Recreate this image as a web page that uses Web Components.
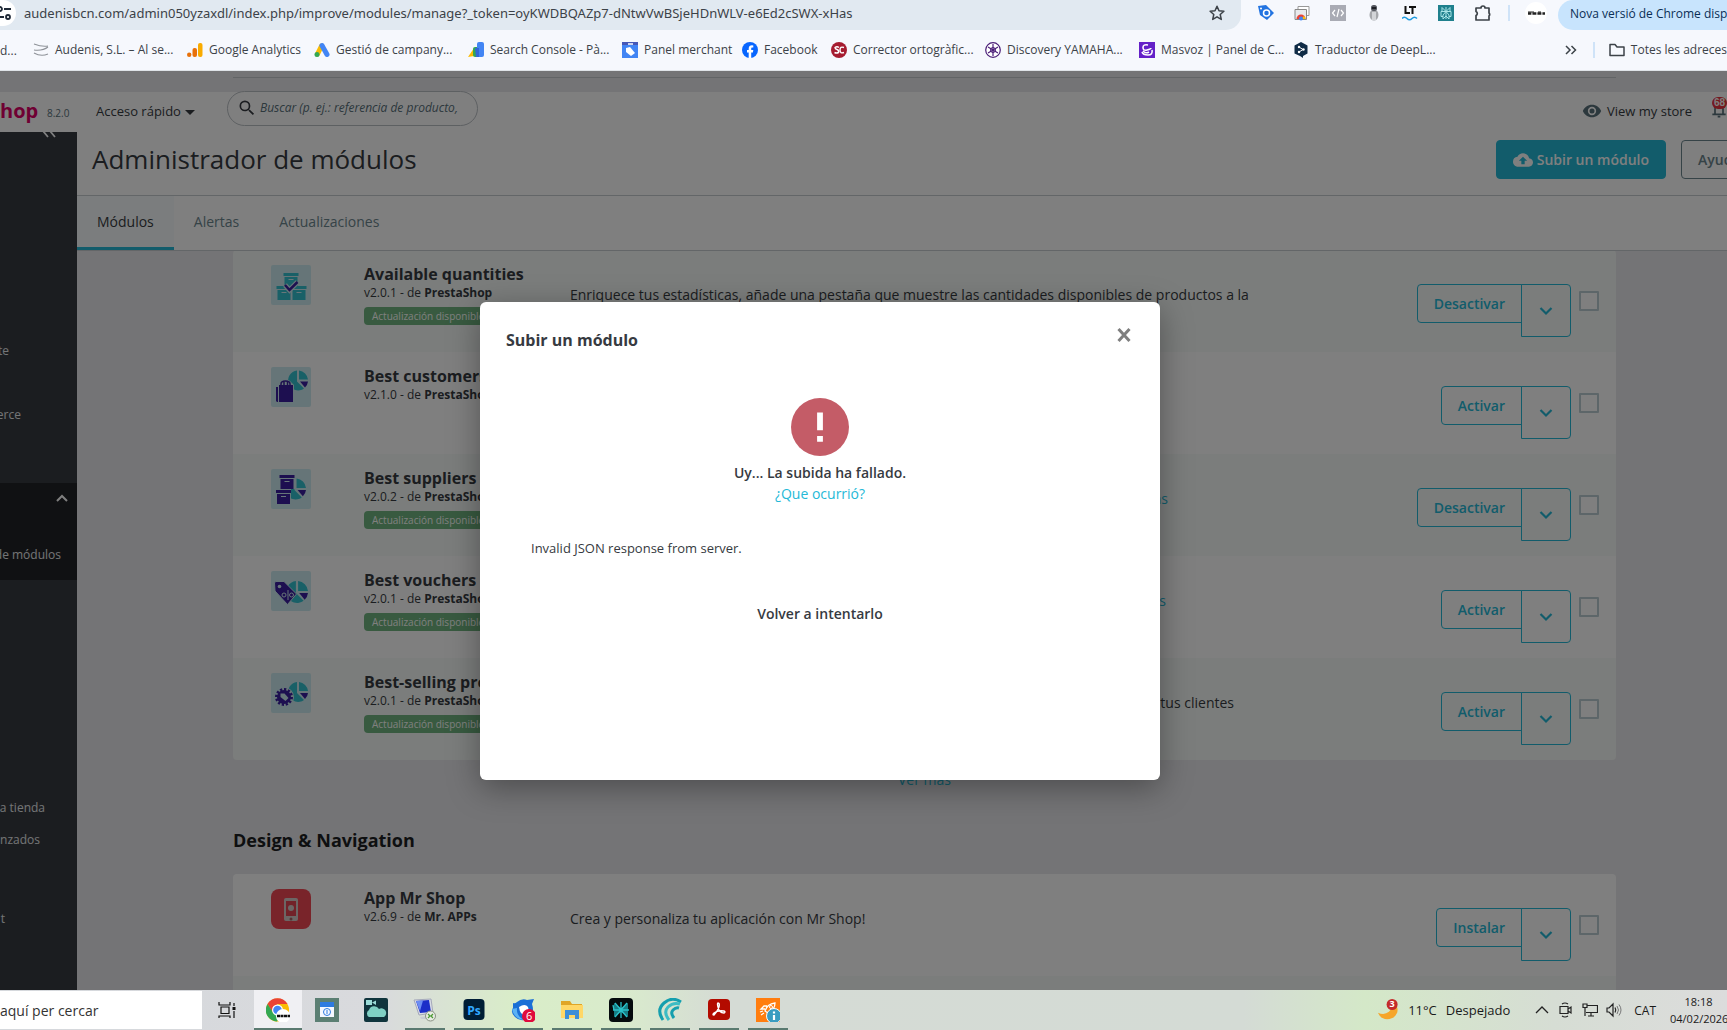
<!DOCTYPE html>
<html lang="es">
<head>
<meta charset="utf-8">
<title>Administrador de módulos</title>
<style>
  html, body { height: 100%; margin: 0; }
  body {
    display: flex;
    flex-direction: column;
    overflow: hidden;
    font-family: "Open Sans", "Noto Sans", sans-serif;
    font-size: 14px;
    color: #363a41;
  }
</style>
</head>
<body>
<browser-bar></browser-bar>
<admin-page>
  <upload-modal heading="Subir un módulo">
    <span slot="message">Uy... La subida ha fallado.</span>
    <span slot="detail">Invalid JSON response from server.</span>
  </upload-modal>
</admin-page>
<task-bar></task-bar>

<script>
  const pie = (x, y, r) => `<g transform="translate(${x} ${y}) scale(${r / 10})">
      <path fill="#32c0cf" d="M-1-10V1l7 7A10 10 0 1 1-1-10zM1-10A10 10 0 0 1 10-1H1z"/>
      <path fill="#3a1fa0" d="M2 1h8a10 10 0 0 1-3 6z"/></g>`;
  const box = (x, y, c) => `<path fill="${c}" d="M${x} ${y}h15v3h-15zM${x + 1} ${y + 4}h13v10h-13z"/><path stroke="#d0eff5" stroke-width="1" d="M${x + 5} ${y + 6.5}h5"/>`;
  const tile = '<rect width="40" height="40" rx="2" fill="#cdebf0"/>';

  const ICONS = {
    // browser toolbar
    tune: ['0 0 16 16', '<g fill="none" stroke="#1f2937" stroke-width="1.8"><circle cx="4" cy="4" r="2"/><path d="M8 4h7M1 12h7"/><circle cx="12" cy="12" r="2"/></g>'],
    star: ['0 0 16 16', '<path fill="none" stroke="#3c4248" stroke-width="1.5" stroke-linejoin="round" d="M8 1.3l2 4.5 4.9.5-3.7 3.2 1.1 4.9L8 11.8l-4.3 2.6 1.1-4.9L1.100 6.300l4.900-.5z"/>'],
    tag: ['0 0 16 16', '<path fill="#2374e1" d="M0 1l8-1 8 8-7 7-7-5z"/><circle cx="8.500" cy="8" r="3" fill="none" stroke="#fff" stroke-width="1.500"/><circle cx="3" cy="3.500" r="1" fill="#fff"/>'],
    store: ['0 0 16 16', '<path fill="#fff" stroke="#999" d="M4 1.500h11v9H4z"/><path fill="#e8eaed" stroke="#888" d="M1 4.500h11.500v10H1z"/><path fill="#ea4335" d="M2.500 14a4.500 4.500 0 0 1 9 0z"/><path fill="#fbbc04" d="M7 14h4.500a4.500 4.500 0 0 0-1.500-3z"/><circle cx="7" cy="13.500" r="2" fill="#4285f4"/>'],
    code: ['0 0 16 16', '<path fill="#a9abb4" d="M0 0h16v16H0z"/><path fill="none" stroke="#fff" stroke-width="1.200" d="M5 5L2.500 8 5 11M11 5l2.500 3-2.500 3M9 4l-2 8"/>'],
    robot: ['0 0 16 16', '<ellipse cx="8" cy="10" rx="4.500" ry="5.500" fill="#a5a7ab"/><path fill="#d3d5d8" d="M6 7h4v8H6z"/><rect x="5" y="0" width="6" height="6" rx="2.500" fill="#555860"/><path stroke="#1d1f25" stroke-width="2" d="M6 3h4"/>'],
    lt: ['0 0 16 16', '<path stroke="#111" stroke-width="2" fill="none" d="M3.500 1v7H8M7 2h7M10.500 2v7"/><path fill="none" stroke="#1e9be0" stroke-width="1.600" d="M0 13.500q2.500-2.500 5 0t5 0 5 0"/>'],
    perplexity: ['0 0 16 16', '<path fill="#1f808d" d="M0 0h16v16H0z"/><path fill="none" stroke="#a8e4e6" stroke-width="1" d="M8 2v12M4 2.500l4 4 4-4v4H4zM3 6.500h10v5h-2M3 6.500v5h2M8 6.500l-3 3.500v4l3-3 3 3v-4z"/>'],
    puzzle: ['0 0 18 18', '<path fill="none" stroke="#3c4248" stroke-width="1.700" stroke-linejoin="round" d="M2 4h5a2 2 0 0 1 4 0h4v5a2 2 0 0 1 0 3v4H2v-4.500a2.200 2.200 0 0 0 0-4z"/>'],
    avatar: ['0 0 24 24', '<circle cx="12" cy="12" r="11" fill="#fff"/><path stroke="#222" stroke-width="2.500" stroke-dasharray="3 .6 1 .4" d="M4 12.500h17"/><path stroke="#222" d="M4 11h6M14 11h3"/>'],
    // bookmarks
    audenis: ['0 0 16 16', '<path fill="none" stroke="#8e9298" stroke-width="1.100" d="M1 2q8 3 14 2M1 8q9 1 14-3M1 11q7 4 14 1"/>'],
    analytics: ['0 0 16 16', '<rect x="11" y="1" width="4.500" height="14" rx="2" fill="#f9ab00"/><rect x="5.500" y="6" width="4.500" height="9" rx="2" fill="#e8710a"/><circle cx="2.200" cy="12.800" r="2.200" fill="#e8710a"/>'],
    ads: ['0 0 16 16', '<path stroke="#fbbc04" stroke-width="5" stroke-linecap="round" d="M7.500 4L3.500 12"/><path stroke="#4285f4" stroke-width="5" stroke-linecap="round" d="M8 3.500l5 9"/><circle cx="3" cy="12.500" r="2.500" fill="#34a853"/>'],
    search_console: ['0 0 16 16', '<path fill="#fbbc04" d="M0 15l6-9v8z"/><rect x="5" y="5" width="6" height="10" rx="2" fill="#34a853"/><path fill="#4285f4" d="M9 2a2 2 0 0 1 2-2h3a2 2 0 0 1 2 2v11a2 2 0 0 1-2 2h-5z"/><path fill="#3367d6" d="M7 6h4v9H8z"/>'],
    merchant: ['0 0 16 16', '<path fill="#4285f4" d="M0 0h16v16H0z"/><path fill="#4658b8" d="M0 0h16v3H0z"/><path stroke="#fff" stroke-width="1.500" d="M6 2h5"/><path fill="#fff" d="M4 6l4-1 5 6-4 3-5-4z"/>'],
    facebook: ['0 0 16 16', '<circle cx="8" cy="8" r="8" fill="#0866ff"/><path fill="#fff" d="M6.700 16v-5.500H5V8h1.700V6.800C6.700 4.400 7.900 3.300 10 3.300l1.300.1v2.200h-.9c-.9 0-1.200.4-1.200 1.200V8h2.100l-.4 2.500H9.200V16z"/>'],
    corrector: ['0 0 16 16', '<circle cx="8" cy="8" r="8" fill="#a51c30"/><path fill="none" stroke="#fff" stroke-width="1.400" d="M8 5.500q-2-1.500-4 0 0 1.500 2 2t1.500 3q-2 1-4 0M13 5.500q-4-1.500-4 2.500t4 2.500"/>'],
    yamaha: ['0 0 16 16', '<circle cx="8" cy="8" r="7.300" fill="#fff" stroke="#4b1e78" stroke-width="1.200"/><path stroke="#4b1e78" stroke-width="1.200" d="M8 2v12M3 5l10 6M13 5L3 11"/><circle cx="8" cy="8" r="2.500" fill="none" stroke="#4b1e78"/>'],
    masvoz: ['0 0 16 16', '<path fill="#6420c8" d="M0 0h16v16H0z"/><path fill="none" stroke="#fff" stroke-width="1.600" d="M9 3Q4 2 4 5.500T8 8t4-2M13 8q1 5-4 5t-6-3M4 9q3 3 6 1"/>'],
    deepl: ['0 0 16 16', '<path fill="#0f2b46" d="M8 0l6.500 3.500v8L10 14v2l-3-2-5.500-2.500v-8z"/><path stroke="#fff" fill="none" d="M6 5l4 2.500L6 10"/><circle cx="6" cy="5" r="1.200" fill="#fff"/><circle cx="10.500" cy="7.500" r="1.200" fill="#fff"/><circle cx="6" cy="10" r="1.200" fill="#fff"/>'],
    more: ['0 0 16 16', '<path fill="none" stroke="#3c4248" stroke-width="1.500" d="M3 4l4 4-4 4M8.500 4l4 4-4 4"/>'],
    folder: ['0 0 16 16', '<path fill="none" stroke="#3c4248" stroke-width="1.500" stroke-linejoin="round" d="M1 2.500h5L8 5h7v8.500H1z"/>'],
    // back office
    search: ['0 0 24 24', '<path fill="#363a41" d="M15.500 14h-.79l-.28-.27A6.470 6.470 0 0 0 16 9.500 6.500 6.500 0 1 0 9.500 16c1.610 0 3.090-.59 4.230-1.570l.27.28v.79l5 4.990L20.490 19zm-6 0a4.500 4.500 0 1 1 0-9 4.500 4.500 0 0 1 0 9z"/>'],
    eye: ['0 0 24 24', '<path fill="#58707a" d="M12 4.500C7 4.500 2.730 7.610 1 12c1.730 4.390 6 7.500 11 7.500s9.270-3.110 11-7.500c-1.730-4.390-6-7.500-11-7.500zM12 17a5 5 0 1 1 0-10 5 5 0 0 1 0 10zm0-8a3 3 0 1 0 0 6 3 3 0 0 0 0-6z"/>'],
    bell: ['0 0 24 24', '<path fill="none" stroke="#58707a" stroke-width="2.500" d="M2 17h20M6 17V9a6 6 0 0 1 12 0v8M10 20.500h4"/>'],
    cloud: ['0 0 24 24', '<path fill="#fff" d="M19.350 10.040A7.490 7.490 0 0 0 12 4C9.110 4 6.600 5.640 5.350 8.040A5.994 5.994 0 0 0 0 14c0 3.310 2.690 6 6 6h13c2.760 0 5-2.240 5-5 0-2.640-2.050-4.780-4.650-4.960zM14 13v4h-4v-4H7l5-5 5 5h-3z"/>'],
    collapse: ['0 0 16 6', '<path fill="none" stroke="#fff" stroke-width="1.800" d="M1-1l5 6M8-1l5 6"/>'],
    up: ['0 0 16 16', '<path fill="none" stroke="#fff" stroke-width="2" d="M3 10l5-5 5 5"/>'],
    down: ['0 0 16 16', '<path fill="none" stroke="#25b9d7" stroke-width="2.200" d="M2.500 5L8 10.500 13.500 5"/>'],
    quantities: ['0 0 40 40', tile + box(12.500, 8, '#32c0cf') + box(5.500, 21, '#32c0cf') + box(20.500, 21, '#32c0cf') + '<path fill="none" stroke="#cdebf0" stroke-width="5" d="M14 20l4.500 5 8-8"/><path fill="none" stroke="#3a1fa0" stroke-width="2.500" d="M14 20l4.500 5 8-8"/>'],
    customers: ['0 0 40 40', tile + pie(27, 13.500, 10) + '<path fill="#cdebf0" d="M4 20l5-6q5-4 10 0l4 4v18H4z"/><path fill="#3a1fa0" d="M5 20h2v15H6l-1-1zM8 18h14v17H8z"/><path fill="none" stroke="#3a1fa0" stroke-width="1.500" d="M10 22v-5q0-3 4.500-3t4.500 3v5M13 21v-6M16.500 21v-6"/>'],
    suppliers: ['0 0 40 40', tile + pie(24.500, 20, 10.500) + '<path fill="#cdebf0" d="M4 5h20v15H4zM4 19h16v18H4z"/>' + box(8.500, 6, '#3a1fa0') + box(5, 21, '#3a1fa0')],
    vouchers: ['0 0 40 40', tile + pie(26, 21, 11) + '<path fill="#3a1fa0" stroke="#cdebf0" d="M3.500 12l1-1.500h8.500L25.500 23l-9 10.500L4 20z"/><circle cx="8.500" cy="15.500" r="1.800" fill="#cdebf0"/><g fill="none" stroke="#cdebf0"><circle cx="13" cy="24" r="2"/><circle cx="20.500" cy="24" r="2"/><path d="M17 19v10"/></g>'],
    selling: ['0 0 40 40', tile + pie(27, 19, 10) + '<circle cx="13" cy="24" r="10" fill="#cdebf0"/><circle cx="13" cy="24" r="7.500" fill="none" stroke="#3a1fa0" stroke-width="3" stroke-dasharray="2.200 1.700"/><circle cx="13" cy="24" r="7" fill="#3a1fa0"/><path fill="#cdebf0" d="M9.500 20.500h4l4 4.500-3 3-5-4z"/>'],
    mrshop: ['0 0 40 40', '<rect width="40" height="40" rx="8" fill="#f24855"/><rect x="13" y="9" width="14" height="23" rx="2" fill="#d9cdca"/><path fill="#e44452" d="M15 12h10v15H15z"/><circle cx="20" cy="19" r="3" fill="#d9cdca"/><circle cx="20" cy="30" r="1.500" fill="#a66"/>'],
    error: ['0 0 24 24', '<path fill="#c45c67" d="M12 0a12 12 0 1 0 0 24 12 12 0 0 0 0-24z"/><path fill="#fff" d="M10.800 6h2.400v7.300h-2.400zM10.800 15.700h2.400v2.400h-2.400z"/>'],
    close: ['0 0 16 16', '<path stroke="#7f7f7f" stroke-width="3" d="M2.500 2l11 12M13.500 2l-11 12"/>'],
    // taskbar
    taskview: ['0 0 20 20', '<path fill="none" stroke="#111" stroke-width="1.200" d="M2 2v3h11V2M2 18v-2h11v2M4 7h8v6.500H4zM17 3v3M17 11v7"/><path fill="#111" d="M15.500 7h3v3h-3z"/>'],
    chrome: ['0 0 24 24', '<circle cx="11.500" cy="12" r="11.500" fill="#fbbc04"/><path fill="#ea4335" d="M1.500 6A11.500 11.500 0 0 1 21.500 6h-10l-5 8z"/><path fill="#34a853" d="M1.500 6a11.500 11.500 0 0 0 9.500 17.500l5-9h-9z"/><circle cx="11.500" cy="12" r="5.500" fill="#fff"/><circle cx="11.500" cy="12" r="4.300" fill="#4285f4"/><circle cx="17" cy="18" r="7" fill="#fff"/><path stroke="#111" stroke-width="2.500" stroke-dasharray="3 .5" d="M11 18h13"/>'],
    calendar: ['0 0 24 24', '<path fill="#5b7f73" d="M0 0h24v24H0z"/><path fill="#f4f8ff" d="M5 4h14v15H5z"/><path fill="#2d7be0" d="M5 4h14v5H5z"/><circle cx="12" cy="14" r="3.500" fill="none" stroke="#2d7be0"/><path stroke="#2d7be0" d="M12 12v4"/>'],
    camcloud: ['0 0 24 24', '<rect width="24" height="24" rx="2" fill="#10343d"/><path fill="#9bdcd8" d="M2 2h6v5H2zM8 4.500l4-2v4.500z"/><path fill="#7fd0c4" d="M5 19a4 4 0 0 1 0-7 5.500 5.500 0 0 1 10-1 4 4 0 0 1 5 8z"/>'],
    remote: ['0 0 24 24', '<path fill="#d8dbe6" stroke="#a5a9ba" d="M1 2l17-1 2 14-14 2z"/><path fill="#1c2ec8" d="M3 3l13-1 2 12-11 1z"/><path fill="#6c8df2" d="M3 3l7-.5L7 13z"/><path fill="#c9ccd6" d="M7 19l8-1 3 3H8z"/><circle cx="17.500" cy="18" r="5" fill="#e8ece4" stroke="#8a9184"/><path fill="none" stroke="#4c9a36" stroke-width="1.300" d="M15 16l2 2-2 2M20 16l-2 2 2 2"/>'],
    photoshop: ['0 0 24 24', '<rect x="1.500" y="1" width="21" height="21" rx="4" fill="#001e36"/>'],
    thunderbird: ['0 0 24 24', '<path fill="#1a6fd6" d="M2 5q2 1 4-1 5-4 10-2l7-1-2 5q3 9-3 14-8 5-14-1-5-5-2-9z"/><path fill="#5bb2f5" d="M1 11q2 10 12 11-8-4-7-12z"/><path fill="#fff" d="M8 9q6-4 9 0 2 5-3 8-5 0-6-8z"/><circle cx="18" cy="18" r="7" fill="#e00b3d"/>'],
    explorer: ['0 0 24 24', '<path fill="#e0a526" d="M1 3h9l2 3h10v5H1z"/><path fill="#ffd766" d="M1 7h22v13H1z"/><path fill="#3d8fd8" d="M5 12h14v9h-4v-4H9v4H5z"/>'],
    perplexity_app: ['0 0 24 24', '<rect width="24" height="24" rx="4" fill="#050b0d"/><path fill="#167d85" d="M5 5l7 5 7-5v14l-7-5-7 5z"/><path fill="none" stroke="#2bc0c9" stroke-width="1.300" d="M12 4v16M5 12L4 7M12 12L6 5M12 12l6-7M12 12l-6 7M12 12l6 7M4 12h16"/>'],
    swirl: ['0 0 24 24', '<g fill="none" stroke="#159fae" stroke-width="3"><path d="M5 22Q-2 12 6 5t17-1"/><path stroke="#3cbcc4" d="M11 22Q5 14 10 9t12-3"/><path d="M16 20q-4-5-1-8t6-2"/></g>'],
    acrobat: ['0 0 24 24', '<rect x="1" y="1" width="22" height="21" rx="4" fill="#b30b00"/><path fill="none" stroke="#fff" stroke-width="1.400" d="M11 5q2 0 1 4-2 5-5 8-2 0 0-2 4-3 10-2 2 1 0 2-5 0-6-6-1-4 0-4z"/>'],
    rocket: ['0 0 24 24', '<path fill="#ff7d0f" d="M0 0h24v24H0z"/><path fill="none" stroke="#fff" stroke-width="1.300" d="M9 13q2-7 10-8 0 7-7 10zM9 11H5l3-3h3M12 15v4l3-3v-3M5 17l3-2M4 14l3-1"/><circle cx="15" cy="9" r="1.500" fill="none" stroke="#fff"/><circle cx="18" cy="18" r="7.500" fill="#3b9cc0" stroke="#fff"/><path stroke="#fff" stroke-width="2.200" d="M18 13.500v2M18 17v5"/>'],
    moon: ['0 0 24 24', '<path fill="#f6a62b" d="M1 15q7 3 12-1 4-4 4-11 7 5 5 12-3 7-11 7Q4 22 1 15z"/><circle cx="16.500" cy="6" r="6" fill="#c42b2b"/>'],
    chevron: ['0 0 16 16', '<path fill="none" stroke="#222" stroke-width="1.300" d="M2 11l6-6 6 6"/>'],
    camera: ['0 0 16 16', '<path fill="none" stroke="#222" stroke-width="1.200" d="M2 4.500h8v7H2zM10 7l3-2v6l-3-2M4 2q3-2 6 0M4 14q3 2 6 0"/>'],
    network: ['0 0 16 16', '<path fill="none" stroke="#222" stroke-width="1.200" d="M5 3.500h10.500v7H4M9 10.500v3M6 14h6M1 2h4v3.500H1zM3 6v8"/>'],
    volume: ['0 0 16 16', '<path fill="none" stroke="#222" stroke-width="1.200" d="M1 6h2l4-4v12l-4-4H1zM9 5.500q1.500 2.500 0 5"/><path fill="none" stroke="#777" d="M11 4q3 4 0 8M13 2.500q4 5.500 0 11"/>']
  };

  class UiIcon extends HTMLElement {
    constructor() {
      super();
      this.attachShadow({ mode: "open" });
    }

    connectedCallback() {
      const [viewBox, body] = ICONS[this.getAttribute("name")];
      this.shadowRoot.innerHTML = `
        <style>
          :host { display: inline-block; flex: none; width: var(--size, 16px); height: var(--size, 16px); }
          svg { display: block; width: 100%; height: 100%; }
        </style>
        <svg viewBox="${viewBox}" aria-hidden="true">${body}</svg>`;
    }
  }
  customElements.define("ui-icon", UiIcon);

  class BookmarkLink extends HTMLElement {
    constructor() {
      super();
      this.attachShadow({ mode: "open" });
    }

    connectedCallback() {
      this.shadowRoot.innerHTML = `
        <style>
          :host { display: block; flex: none; }
          :host([long]) { width: 134px; }
          a { display: flex; align-items: center; gap: 6px; color: #3c4248; text-decoration: none; font-size: 12px; line-height: 20px; white-space: nowrap; }
        </style>
        <a href="#"><ui-icon name="${this.getAttribute("icon")}"></ui-icon><slot></slot></a>`;
    }
  }
  customElements.define("bookmark-link", BookmarkLink);

  class BrowserBar extends HTMLElement {
    constructor() {
      super();
      this.attachShadow({ mode: "open" });
    }

    connectedCallback() {
      const tools = ["tag", "store", "code", "robot", "lt", "perplexity"];
      this.shadowRoot.innerHTML = `
        <style>
          :host { display: block; flex: none; overflow: hidden; background: #f6f8fd; border-bottom: 1px solid #dfe3e8; color: #3c4248; }
          button { border: 0; background: none; padding: 0; font: inherit; color: inherit; display: flex; }
          .top { display: flex; align-items: flex-start; height: 30px; }
          .address { flex: 1; display: flex; align-items: center; height: 30px; box-sizing: border-box; padding: 0 16px 4px 0; background: #e1e9f1; border-radius: 0 0 15px 0; }
          .site { width: 16px; height: 26px; border-radius: 0 14px 14px 0; background: #fff; align-items: center; justify-content: flex-end; padding-right: 4px; box-sizing: border-box; overflow: hidden; }
          input { flex: 1; min-width: 0; margin: 0 0 0 8px; border: 0; padding: 0; background: none; font: 13px "Noto Sans", sans-serif; color: #3c4248; }
          .tools { display: flex; align-items: center; gap: 20px; height: 26px; padding: 0 12px 0 17px; }
          .rule { width: 2px; height: 16px; background: #cfe3f8; }
          .tools .rule { margin: 0 -4px; }
          .puzzle { --size: 18px; }
          .avatar { --size: 24px; margin: 0 -2px; }
          .update { flex: none; width: 169px; height: 30px; padding: 0 0 4px 12px; box-sizing: border-box; align-items: center; background: #c8e4fd; color: #0a2e55; border-radius: 15px 0 0 15px; font-size: 12px; white-space: nowrap; overflow: hidden; }
          nav { display: flex; align-items: center; gap: 20px; height: 40px; font-size: 12px; }
          .cut { width: 13px; white-space: nowrap; }
          .analytics { width: 107px; }
          .merchant { width: 100px; }
          .facebook { width: 69px; }
          .end { display: flex; align-items: center; gap: 14px; margin-left: auto; }
        </style>
        <div class="top">
          <div class="address">
            <button class="site" aria-label="Información del sitio"><ui-icon name="tune"></ui-icon></button>
            <input aria-label="Dirección" value="audenisbcn.com/admin050yzaxdl/index.php/improve/modules/manage?_token=oyKWDBQAZp7-dNtwVwBSjeHDnWLV-e6Ed2cSWX-xHas">
            <button aria-label="Favorito"><ui-icon name="star"></ui-icon></button>
          </div>
          <div class="tools">
            ${tools.map(t => `<button aria-label="${t}"><ui-icon name="${t}"></ui-icon></button>`).join("")}
            <button class="puzzle" aria-label="Extensiones"><ui-icon name="puzzle"></ui-icon></button>
            <span class="rule"></span>
            <button class="avatar" aria-label="Perfil"><ui-icon name="avatar"></ui-icon></button>
          </div>
          <button class="update">Nova versió de Chrome dispo</button>
        </div>
        <nav>
          <span class="cut">d...</span>
          <bookmark-link long icon="audenis">Audenis, S.L. – Al se...</bookmark-link>
          <bookmark-link class="analytics" icon="analytics">Google Analytics</bookmark-link>
          <bookmark-link long icon="ads">Gestió de campany...</bookmark-link>
          <bookmark-link long icon="search_console">Search Console - Pà...</bookmark-link>
          <bookmark-link class="merchant" icon="merchant">Panel merchant</bookmark-link>
          <bookmark-link class="facebook" icon="facebook">Facebook</bookmark-link>
          <bookmark-link long icon="corrector">Corrector ortogràfic...</bookmark-link>
          <bookmark-link long icon="yamaha">Discovery YAMAHA...</bookmark-link>
          <bookmark-link long icon="masvoz">Masvoz | Panel de C...</bookmark-link>
          <bookmark-link long icon="deepl">Traductor de DeepL...</bookmark-link>
          <div class="end">
            <button aria-label="Más marcadores"><ui-icon name="more"></ui-icon></button>
            <span class="rule"></span>
            <bookmark-link icon="folder">Totes les adreces</bookmark-link>
          </div>
        </nav>`;
    }
  }
  customElements.define("browser-bar", BrowserBar);

  class SideMenu extends HTMLElement {
    constructor() {
      super();
      this.attachShadow({ mode: "open" });
    }

    connectedCallback() {
      this.shadowRoot.innerHTML = `
        <style>
          :host { display: block; flex: none; width: 77px; background: #363a41; overflow: hidden; }
          .collapse { display: flex; margin-left: 42px; padding: 0; border: 0; background: none; }
          .collapse ui-icon { width: 16px; height: 6px; }
          nav { padding-top: 197px; }
          a { display: flex; justify-content: flex-end; width: 61px; height: 32px; line-height: 32px; font-size: 12px; color: #e8eaec; text-decoration: none; white-space: nowrap; }
          .gap { margin-bottom: 32px; }
          .w1 { width: 9px; }
          .w2 { width: 21px; margin-bottom: 52px; }
          .w3 { width: 45px; margin-top: 212px; }
          .w4 { width: 40px; margin-bottom: 47px; }
          .w5 { width: 5px; }
          .open { background: #202226; padding-bottom: 9px; height: 88px; }
          .open button { display: block; margin: 0 0 24px 54px; padding: 8px 0; border: 0; background: none; height: 32px; }
        </style>
        <button class="collapse" aria-label="Contraer menú"><ui-icon name="collapse"></ui-icon></button>
        <nav>
          <a class="w1 gap" href="#">te</a>
          <a class="w2" href="#">erce</a>
          <div class="open">
            <button aria-label="Plegar módulos"><ui-icon name="up"></ui-icon></button>
            <a href="#">de módulos</a>
          </div>
          <a class="w3" href="#">a tienda</a>
          <a class="w4" href="#">nzados</a>
          <a class="w5" href="#">t</a>
        </nav>`;
    }
  }
  customElements.define("side-menu", SideMenu);

  class ModuleRow extends HTMLElement {
    constructor() {
      super();
      this.attachShadow({ mode: "open" });
    }

    connectedCallback() {
      const name = this.getAttribute("name");
      this.shadowRoot.innerHTML = `
        <style>
          :host { display: grid; grid-template-columns: 93px 206px 1fr auto; height: 102px; box-sizing: border-box; padding: 15px 17px 0 38px; background: #fff; }
          :host([shaded]) { background: #f7faf8; }
          ui-icon { --size: 40px; }
          h3 { margin: 0; font-size: 16px; line-height: 18px; font-weight: 700; white-space: nowrap; color: #363a41; }
          p { margin: 0; font-size: 12px; line-height: 19px; white-space: nowrap; }
          .badge { display: inline-block; margin-top: 5px; padding: 0 8px; font-size: 10px; line-height: 18px; border-radius: 4px; background: #70b580; color: #fff; white-space: nowrap; }
          .desc { padding-top: 20px; line-height: 20px; font-size: 14px; white-space: nowrap; }
          ::slotted(a) { color: #25b9d7; text-decoration: none; }
          .actions { display: flex; align-items: flex-start; padding-top: 19px; }
          button { box-sizing: border-box; border: 1px solid #25b9d7; background: none; color: #25b9d7; font: inherit; font-size: 14px; font-weight: 600; height: 39px; padding: 0 16px; border-radius: 4px 0 0 4px; }
          .more { width: 50px; height: 53px; margin-left: -1px; padding: 5px 0 0; border-radius: 0 4px 4px 0; }
          .more ui-icon { --size: 16px; }
          input { appearance: none; width: 20px; height: 20px; margin: 7px 0 0 8px; border: 2px solid #bbcdd2; border-radius: 1px; background: #fff; }
        </style>`;
      // placeholder row, still loading
      if (!name) return;
      this.shadowRoot.innerHTML += `
        <div><ui-icon name="${this.getAttribute("icon")}"></ui-icon></div>
        <div>
          <h3>${name}</h3>
          <p>v${this.getAttribute("version")} - de <b>${this.getAttribute("author") || "PrestaShop"}</b></p>
          ${this.hasAttribute("update") ? '<span class="badge">Actualización disponible</span>' : ""}
        </div>
        <div class="desc"><slot></slot></div>
        <div class="actions">
          <button>${this.getAttribute("action")}</button>
          <button class="more" aria-label="Más acciones"><ui-icon name="down"></ui-icon></button>
          <input type="checkbox" aria-label="${name}">
        </div>`;
    }
  }
  customElements.define("module-row", ModuleRow);

  class AdminPage extends HTMLElement {
    constructor() {
      super();
      this.attachShadow({ mode: "open" });
    }

    connectedCallback() {
      this.shadowRoot.innerHTML = `
        <style>
          :host { display: flex; flex-direction: column; flex: 1; min-height: 0; position: relative; overflow: hidden; background: #e9e9ed; }
          .strip { flex: none; height: 21px; padding: 6px 111px 0 233px; box-sizing: border-box; }
          .strip div { height: 1px; background: #c4c8cc; }
          .topbar { flex: none; display: flex; align-items: center; height: 40px; box-sizing: border-box; padding-bottom: 2px; background: #fff; }
          .logo { width: 47px; font-size: 20px; line-height: 36px; font-weight: 700; color: #df0067; }
          .version { width: 49px; font-size: 10px; padding-top: 4px; color: #58707a; }
          .quick { display: flex; align-items: center; gap: 4px; width: 131px; padding: 0; border: 0; background: none; font: inherit; font-size: 13px; color: #363a41; }
          .quick::after { content: ""; margin-top: 3px; border: 5px solid transparent; border-top-color: #363a41; border-bottom: 0; }
          .find { align-self: flex-start; display: flex; align-items: center; gap: 3px; width: 251px; height: 35px; margin-top: -1px; padding: 0 18px 2px 9px; box-sizing: border-box; border: 1px solid #bbc0c5; border-radius: 18px; background: #fff; }
          .find ui-icon { --size: 20px; }
          .find input { flex: 1; min-width: 0; padding: 0; border: 0; background: none; font: italic 12px "Open Sans", sans-serif; }
          .find input::placeholder { color: #58707a; opacity: 1; }
          .store { display: flex; align-items: center; gap: 5px; margin-left: auto; font-size: 13px; color: #363a41; text-decoration: none; }
          .store ui-icon { --size: 20px; }
          .bell { position: relative; display: flex; flex: none; width: 16px; height: 16px; margin-left: 19px; padding: 0; border: 0; background: none; }
          .bell span { position: absolute; left: 1px; top: -6px; padding: 0 2px; border-radius: 7px; background: #e8333f; color: #fff; font-size: 10px; line-height: 12px; font-weight: 700; }
          .columns { display: flex; flex: 1; min-height: 0; }
          main { flex: 1; min-width: 0; overflow: hidden; }
          .title { display: flex; align-items: flex-start; gap: 15px; height: 64px; box-sizing: border-box; padding: 8px 0 0 15px; border-bottom: 1px solid #c7cdd1; background: #fff; }
          h1 { flex: 1; margin: 0; font-size: 26px; line-height: 39px; font-weight: 400; }
          .title button { display: flex; align-items: center; gap: 4px; box-sizing: border-box; height: 39px; padding: 0 16px; border: 1px solid #25b9d7; border-radius: 4px; background: #25b9d7; color: #fff; font: inherit; font-size: 14px; font-weight: 600; }
          .title ui-icon { --size: 20px; }
          .title .help { width: 80px; margin-right: -34px; border-color: #6c868e; background: #fff; color: #6c868e; }
          .tabs { position: relative; display: flex; height: 55px; box-sizing: border-box; border-bottom: 1px solid #c7cdd1; background: #fff; }
          .tabs a { box-sizing: border-box; height: 54px; line-height: 52px; padding: 0 20px; color: #6c868e; text-decoration: none; }
          .tabs .on { color: #363a41; background: #f7fafc; border-bottom: 3px solid #25b9d7; }
          section { padding: 0 111px 0 156px; }
          .list { border-radius: 4px; overflow: hidden; }
          .first { margin-top: -1px; }
          .all { display: block; line-height: 20px; padding: 10px 0 0; text-align: center; color: #25b9d7; text-decoration: none; }
          h2 { margin: 0; padding: 38px 0 22px; font-size: 18px; line-height: 24px; font-weight: 700; color: #1c1e22; }
          .tail { display: block; text-align: right; }
          .t0 { width: 596px; }
          .t1 { width: 598px; }
          .t2 { width: 664px; }
          .dim { position: absolute; inset: 0; display: flex; justify-content: center; align-items: flex-start; padding: 231px 87px 0 0; background: rgba(0, 0, 0, .5); }
        </style>
        <div class="strip"><div></div></div>
        <header class="topbar">
          <span class="logo">hop</span>
          <span class="version">8.2.0</span>
          <button class="quick">Acceso rápido</button>
          <label class="find"><ui-icon name="search"></ui-icon><input aria-label="Buscar" placeholder="Buscar (p. ej.: referencia de producto,"></label>
          <a class="store" href="#"><ui-icon name="eye"></ui-icon>View my store</a>
          <button class="bell" aria-label="Notificaciones"><ui-icon name="bell"></ui-icon><span>68</span></button>
        </header>
        <div class="columns">
          <side-menu></side-menu>
          <main>
            <div class="title">
              <h1>Administrador de módulos</h1>
              <button><ui-icon name="cloud"></ui-icon>Subir un módulo</button>
              <button class="help">Ayuda</button>
            </div>
            <nav class="tabs"><a class="on" href="#">Módulos</a><a href="#">Alertas</a><a href="#">Actualizaciones</a></nav>
            <section>
              <div class="list first">
                <module-row shaded update icon="quantities" name="Available quantities" version="2.0.1" action="Desactivar">Enriquece tus estadísticas, añade una pestaña que muestre las cantidades disponibles de productos a la</module-row>
                <module-row icon="customers" name="Best customers" version="2.1.0" action="Activar"></module-row>
                <module-row shaded update icon="suppliers" name="Best suppliers" version="2.0.2" action="Desactivar"><a class="tail t1" href="#">más</a></module-row>
                <module-row update icon="vouchers" name="Best vouchers" version="2.0.1" action="Activar"><a class="tail t0" href="#">más</a></module-row>
                <module-row shaded update icon="selling" name="Best-selling products" version="2.0.1" action="Activar"><span class="tail t2">tus clientes</span></module-row>
              </div>
              <a class="all" href="#">Ver más</a>
              <h2>Design &amp; Navigation</h2>
              <div class="list">
                <module-row icon="mrshop" name="App Mr Shop" version="2.6.9" author="Mr. APPs" action="Instalar">Crea y personaliza tu aplicación con Mr Shop!</module-row>
                <module-row shaded></module-row>
              </div>
            </section>
          </main>
        </div>
        <div class="dim"><slot></slot></div>`;
    }
  }
  customElements.define("admin-page", AdminPage);

  class UploadModal extends HTMLElement {
    constructor() {
      super();
      this.attachShadow({ mode: "open" });
    }

    connectedCallback() {
      this.shadowRoot.innerHTML = `
        <style>
          :host { display: block; width: 680px; min-height: 478px; box-sizing: border-box; padding: 24px 26px; border-radius: 6px; background: #fff; box-shadow: 0 8px 32px rgba(0, 0, 0, .35); }
          header { display: flex; justify-content: space-between; align-items: flex-start; }
          h2 { margin: 0; font-size: 16px; line-height: 28px; font-weight: 700; }
          button { border: 0; background: none; font: inherit; color: inherit; padding: 0; }
          header button { padding: 1px 2px 0 0; }
          .body { display: flex; flex-direction: column; align-items: center; padding-top: 44px; line-height: 21px; text-align: center; }
          .body ui-icon { --size: 58px; margin-bottom: 6px; }
          .strong { font-weight: 600; }
          a { color: #25b9d7; text-decoration: none; }
          .detail { align-self: flex-start; margin: 34px 25px 44px; font-size: 13px; }
        </style>
        <header>
          <h2>${this.getAttribute("heading")}</h2>
          <button aria-label="Cerrar"><ui-icon name="close"></ui-icon></button>
        </header>
        <div class="body">
          <ui-icon name="error"></ui-icon>
          <div class="strong"><slot name="message"></slot></div>
          <a href="#">¿Que ocurrió?</a>
          <div class="detail"><slot name="detail"></slot></div>
          <button class="strong">Volver a intentarlo</button>
        </div>`;
    }
  }
  customElements.define("upload-modal", UploadModal);

  class TaskBar extends HTMLElement {
    constructor() {
      super();
      this.attachShadow({ mode: "open" });
    }

    connectedCallback() {
      const apps = [
        ["chrome", "on"], ["calendar", ""], ["camcloud", ""], ["remote", "run"],
        ["photoshop", "run", "Ps"], ["thunderbird", "run", "6"], ["explorer", "run"],
        ["perplexity_app", "run"], ["swirl", "run"], ["acrobat", "run"], ["rocket", "run"]
      ];
      this.shadowRoot.innerHTML = `
        <style>
          :host { display: flex; flex: none; height: 40px; overflow: hidden; color: #1a1a1a; background: linear-gradient(90deg, #d5d8dc 0, #d9dadd 22%, #d9edc8 30%, #d9ebcc 36%, #d5dbd5 42%, #d4dbd5 72%, #d4e8c8 79%, #d6ddd4 90%, #dcdcdc); }
          input { width: 202px; box-sizing: border-box; margin: 1px 3px 1px 0; padding: 0; border: 0; background: #fff; font: inherit; font-size: 14px; }
          input::placeholder { color: #333; opacity: 1; }
          button { padding: 0; border: 0; background: none; font: inherit; color: inherit; }
          .apps { display: flex; gap: 1px; }
          .app { position: relative; display: flex; align-items: center; justify-content: center; width: 48px; --size: 24px; }
          .view { --size: 20px; justify-content: flex-start; padding-left: 12px; }
          .on { background: #f0f0f3; }
          .run::after, .on::after { content: ""; position: absolute; left: 4px; right: 4px; bottom: 0; height: 2px; background: #5a7a70; }
          .on::after { left: 0; right: 0; }
          .tag { position: absolute; }
          .photoshop .tag { color: #31a8ff; font-size: 12px; font-weight: 700; }
          .thunderbird .tag { left: 27px; top: 18px; color: #fff; font-size: 11px; line-height: 16px; }
          .tray { display: flex; align-items: center; margin-left: auto; gap: 8px; }
          .weather { display: flex; align-items: center; gap: 9px; margin-right: 16px; font-size: 13px; --size: 22px; position: relative; }
          .weather .tag { left: 11px; top: -1px; width: 8px; color: #fff; font-size: 9px; line-height: 12px; font-weight: 700; }
          .tray ui-icon { display: block; }
          .lang { margin: 0 6px 0 4px; font-size: 12px; }
          time { font-size: 11px; line-height: 17px; text-align: center; width: 57px; white-space: nowrap; }
        </style>
        <input aria-label="Cercar" placeholder="aquí per cercar">
        <div class="apps">
          <button class="app view" aria-label="Vista de tareas"><ui-icon name="taskview"></ui-icon></button>
          ${apps.map(([icon, state, tag]) => `<button class="app ${icon} ${state}" aria-label="${icon}"><ui-icon name="${icon}"></ui-icon>${tag ? `<span class="tag">${tag}</span>` : ""}</button>`).join("")}
        </div>
        <div class="tray">
          <button class="weather"><ui-icon name="moon"></ui-icon><span class="tag">3</span><span>11°C</span><span>Despejado</span></button>
          <button aria-label="Iconos ocultos"><ui-icon name="chevron"></ui-icon></button>
          <ui-icon name="camera"></ui-icon>
          <ui-icon name="network"></ui-icon>
          <ui-icon name="volume"></ui-icon>
          <span class="lang">CAT</span>
          <time>18:18<br>04/02/2026</time>
        </div>`;
    }
  }
  customElements.define("task-bar", TaskBar);
</script>
</body>
</html>
